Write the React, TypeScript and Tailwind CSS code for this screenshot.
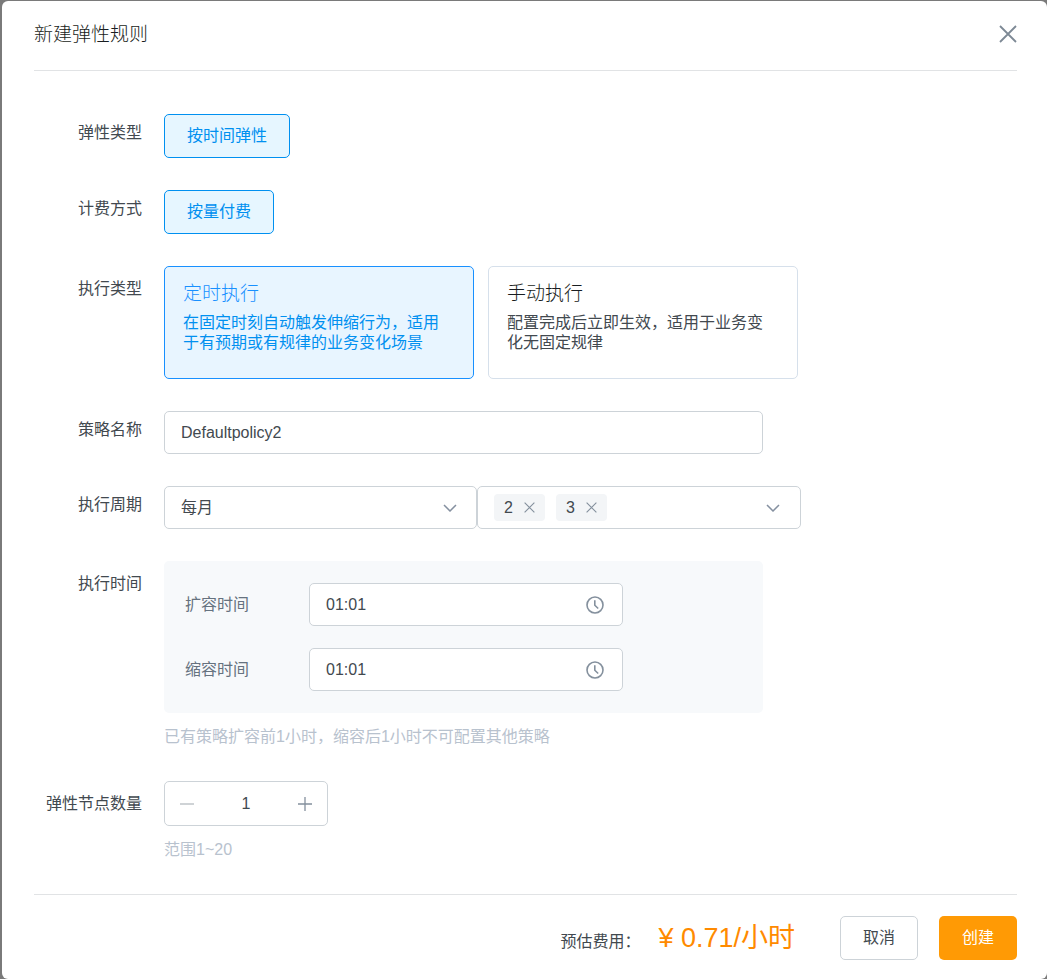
import { useState } from "react";
import type { ReactNode } from "react";

const modes = [
  {
    id: "timed",
    title: "定时执行",
    description: "在固定时刻自动触发伸缩行为，适用于有预期或有规律的业务变化场景",
  },
  {
    id: "manual",
    title: "手动执行",
    description: "配置完成后立即生效，适用于业务变化无固定规律",
  },
];

const fieldClass =
  "h-[43px] w-full rounded-[5px] border border-[#cdd3d8] bg-white px-4 text-base text-[#42494f] outline-none focus:border-[#0090f0]";

function CrossIcon({ className }: { className: string }) {
  return (
    <svg viewBox="0 0 18 18" className={className} fill="none" stroke="currentColor" aria-hidden="true">
      <path d="M1 1 17 17M17 1 1 17" />
    </svg>
  );
}

function ChevronIcon() {
  return (
    <svg viewBox="0 0 14 8" className="h-2 w-3.5 text-[#8590a0]" fill="none" stroke="currentColor" strokeWidth="1.5" aria-hidden="true">
      <path d="M1 1 7 7 13 1" />
    </svg>
  );
}

function ClockIcon() {
  return (
    <svg viewBox="0 0 18 18" className="size-[18px] text-[#84909d]" fill="none" stroke="currentColor" strokeWidth="1.6" aria-hidden="true">
      <circle cx="9" cy="9" r="8" />
      <path d="M8.8 4.2V9.2L12.2 12.5" />
    </svg>
  );
}

function Row({
  label,
  htmlFor,
  tall = false,
  children,
}: {
  label: string;
  htmlFor?: string;
  tall?: boolean;
  children: ReactNode;
}) {
  const labelClass = `w-[108px] shrink-0 text-right text-[#42494f] ${
    tall ? "leading-[46px]" : "leading-[38px]"
  }`;
  return (
    <div className="flex items-start gap-[22px]">
      {htmlFor ? (
        <label htmlFor={htmlFor} className={labelClass}>
          {label}
        </label>
      ) : (
        <span className={labelClass}>{label}</span>
      )}
      <div className="min-w-0 flex-1">{children}</div>
    </div>
  );
}

function Choice({ children }: { children: ReactNode }) {
  return (
    <button
      type="button"
      aria-pressed="true"
      className="h-11 rounded-[5px] border border-[#0090f0] bg-[#e6f6ff] px-[22px] text-[#0090f0]"
    >
      {children}
    </button>
  );
}

function TimeField({ id, label }: { id: string; label: string }) {
  const [time, setTime] = useState("01:01");
  return (
    <div className="flex items-center">
      <label htmlFor={id} className="w-[124px] shrink-0 text-[#66727f]">
        {label}
      </label>
      <div className="relative w-full max-w-[314px]">
        <input id={id} value={time} onChange={(e) => setTime(e.target.value)} className={fieldClass} />
        <span className="pointer-events-none absolute inset-y-0 right-[19px] flex items-center">
          <ClockIcon />
        </span>
      </div>
    </div>
  );
}

export default function App() {
  const [mode, setMode] = useState("timed");
  const [name, setName] = useState("Defaultpolicy2");
  const [days, setDays] = useState([2, 3]);
  const [count, setCount] = useState(1);

  return (
    <div className="flex min-h-screen bg-[#7a7a7a] pt-px pl-0.5 font-['Liberation_Sans','Noto_Sans_CJK_SC',sans-serif] text-base">
      <div role="dialog" aria-labelledby="dialog-title" className="flex flex-1 flex-col rounded-md bg-white pr-[30px] pl-8">
        <header className="flex h-[70px] items-center justify-between border-b border-[#e1e3e5]">
          <h1 id="dialog-title" className="text-[19px] font-light text-[#191d21]">
            新建弹性规则
          </h1>
          <button type="button" aria-label="关闭" className="pb-1 text-[#7d8995]">
            <CrossIcon className="size-[18px] stroke-[1.8]" />
          </button>
        </header>

        <form className="flex flex-1 flex-col gap-8 pt-[43px] pb-8">
          <Row label="弹性类型">
            <Choice>按时间弹性</Choice>
          </Row>

          <Row label="计费方式">
            <Choice>按量付费</Choice>
          </Row>

          <Row label="执行类型" tall>
            <div className="flex gap-3.5">
              {modes.map((item) => {
                const active = item.id === mode;
                return (
                  <button
                    key={item.id}
                    type="button"
                    aria-pressed={active}
                    onClick={() => setMode(item.id)}
                    className={`flex h-[113px] w-full max-w-[310px] flex-col rounded-[5px] border pt-[15px] pr-5 pl-[18px] text-left ${
                      active ? "border-[#1890ff] bg-[#e8f5ff]" : "border-[#d6e0eb] bg-white"
                    }`}
                  >
                    <span className={`text-[19px] leading-6 font-light ${active ? "text-[#1890ff]" : "text-[#191d21]"}`}>
                      {item.title}
                    </span>
                    <span className={`mt-[7px] leading-5 ${active ? "text-[#0090f0]" : "text-[#42494f]"}`}>
                      {item.description}
                    </span>
                  </button>
                );
              })}
            </div>
          </Row>

          <Row label="策略名称" htmlFor="policy-name">
            <div className="max-w-[599px]">
              <input id="policy-name" value={name} onChange={(e) => setName(e.target.value)} className={fieldClass} />
            </div>
          </Row>

          <Row label="执行周期" htmlFor="cycle">
            <div className="flex">
              <div className="relative w-full max-w-[313px]">
                <select id="cycle" defaultValue="month" className={`${fieldClass} appearance-none`}>
                  <option value="day">每天</option>
                  <option value="week">每周</option>
                  <option value="month">每月</option>
                </select>
                <span className="pointer-events-none absolute inset-y-0 right-5 flex items-center">
                  <ChevronIcon />
                </span>
              </div>
              <div className="flex h-[43px] w-full max-w-[324px] items-center gap-[11px] rounded-[5px] border border-[#cdd3d8] pr-5 pl-4">
                {days.map((day) => (
                  <span
                    key={day}
                    className="flex h-[27px] w-[51px] items-center justify-between rounded bg-[#f3f5f7] px-2.5 text-[#42494f]"
                  >
                    {day}
                    <button
                      type="button"
                      aria-label={`移除 ${day}`}
                      onClick={() => setDays(days.filter((d) => d !== day))}
                      className="text-[#84909d]"
                    >
                      <CrossIcon className="size-[11px] stroke-[1.8]" />
                    </button>
                  </span>
                ))}
                <button type="button" aria-label="选择日期" className="ml-auto">
                  <ChevronIcon />
                </button>
              </div>
            </div>
          </Row>

          <Row label="执行时间" tall>
            <div className="flex max-w-[599px] flex-col gap-[22px] rounded-[5px] bg-[#f7f9fb] px-[21px] py-[22px]">
              <TimeField id="scale-out" label="扩容时间" />
              <TimeField id="scale-in" label="缩容时间" />
            </div>
            <p className="mt-3 leading-6 text-[#b8c2ce]">
              已有策略扩容前1小时，缩容后1小时不可配置其他策略
            </p>
          </Row>

          <Row label="弹性节点数量" htmlFor="node-count" tall>
            <div className="flex h-[45px] w-[164px] items-center justify-between rounded-[5px] border border-[#cdd3d8] px-[15px]">
              <button
                type="button"
                aria-label="减少"
                disabled={count <= 1}
                onClick={() => setCount(count - 1)}
                className="text-[#84909d] disabled:text-[#bfc5c8]"
              >
                <svg viewBox="0 0 14 14" className="size-3.5" stroke="currentColor" strokeWidth="1.5" aria-hidden="true">
                  <path d="M0 7H14" />
                </svg>
              </button>
              <input
                id="node-count"
                value={count}
                onChange={(e) => setCount(Number(e.target.value) || 1)}
                className="w-16 text-center text-[#42494f] outline-none"
              />
              <button
                type="button"
                aria-label="增加"
                disabled={count >= 20}
                onClick={() => setCount(count + 1)}
                className="text-[#84909d]"
              >
                <svg viewBox="0 0 14 14" className="size-3.5" stroke="currentColor" strokeWidth="1.3" aria-hidden="true">
                  <path d="M0 7H14M7 0V14" />
                </svg>
              </button>
            </div>
            <p className="mt-3 leading-6 text-[#b8c2ce]">范围1~20</p>
          </Row>
        </form>

        <footer className="flex items-center justify-end border-t border-[#e1e3e5] pt-[21px] pb-[19px]">
          <p className="mr-[45px] flex items-baseline gap-[18px] text-[#42494f]">
            <span>预估费用：</span>
            <strong className="text-[27px] leading-9 font-normal text-[#ff8a00]">¥ 0.71/小时</strong>
          </p>
          <div className="flex gap-[21px]">
            <button type="button" className="h-11 w-[78px] rounded-[5px] border border-[#cdd3d8] text-[#42494f]">
              取消
            </button>
            <button type="button" className="h-11 w-[78px] rounded-[5px] bg-[#ff9a05] text-white">
              创建
            </button>
          </div>
        </footer>
      </div>
    </div>
  );
}
